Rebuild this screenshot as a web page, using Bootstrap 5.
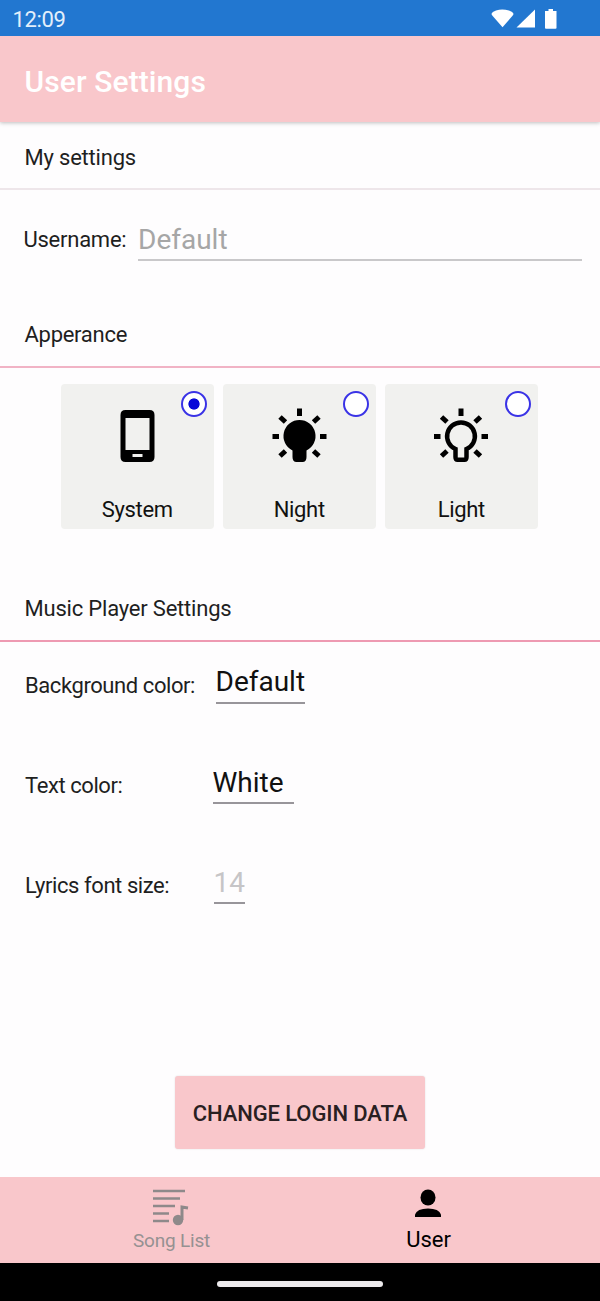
<!DOCTYPE html>
<html lang="en">
<head>
<meta charset="utf-8">
<meta name="viewport" content="width=device-width, initial-scale=1">
<title>User Settings</title>
<link href="https://cdn.jsdelivr.net/npm/bootstrap@5.3.0/dist/css/bootstrap.min.css" rel="stylesheet">
<style>
:root { --pink: #f9c7cb; --rule: #f1b3c5; }
body { width: 600px; height: 1301px; margin: 0; background: #fefdfe; color: #1f1f1f; font-family: Roboto, sans-serif; font-size: 22px; line-height: 26px; overflow: hidden; }
.status-strip { height: 36px; background: #2277d0; color: #e3effb; padding: 2px 43.5px 0 12.5px; letter-spacing: -.35px; }
.status-strip span { padding-top: 2px; }
.title-strip { height: 86px; background: var(--pink); box-shadow: 0 1px 4px rgba(0,0,0,.25); clip-path: inset(0 0 -8px 0); padding: 5px 24.5px 0; position: relative; }
.title-strip h1 { font-size: 30px; line-height: 36px; font-weight: 500; color: #fff; letter-spacing: .1px; }
.section-title { font-size: 22px; line-height: 26px; font-weight: 400; padding: 1px 24.5px 0; border-bottom: 2px solid var(--rule); letter-spacing: -.2px; }
.sec-mine { height: 68px; padding-top: 23px; border-color: #eee6ea; }
.sec-look { height: 47px; letter-spacing: -.28px; }
.sec-player { height: 46px; padding-top: 0; border-color: #ee9ab2; }
.row-user { height: 131px; padding: 37px 18px 0 23.5px; }
.row-user label { width: 114.5px; letter-spacing: -.25px; }
.line-input { appearance: none; border: 0; border-bottom: 2px solid #c9c8ca; border-radius: 0; background: transparent; padding: 0; font-size: 28px; line-height: 32px; color: #111; outline: 0; }
.line-input::placeholder { color: #a6a6a6; opacity: 1; }
.name-input { height: 38px; margin-top: -4px; padding-bottom: 4px; }
.options { height: 228px; padding: 16px 1.5px 0 0; gap: 9px; }
.option { width: 153px; height: 145px; background: #f1f1ef; border-radius: 4px; color: #111; }
.option svg { display: block; margin: 21px auto 0; }
.option .caption { margin-top: 32px; letter-spacing: -.35px; }
.option input { appearance: none; position: absolute; top: 7px; right: 7px; width: 26px; height: 26px; margin: 0; border: 2px solid #3a33e6; border-radius: 50%; background: #fff; }
.option input:checked { background: radial-gradient(circle, #0808d8 5.2px, #fff 6px); }
.pref { height: 100.3px; padding-left: 25px; }
.pref .pref-label { width: 187.5px; padding-top: 30.5px; letter-spacing: -.42px; }
.pref .line-input { margin-top: 23px; height: 38.500px; padding-bottom: 3px; border-bottom: 2px solid #98959a; }
.pref .line-input::placeholder { color: #c6c5c7; }
.login-area { height: 234.1px; padding-top: 133.5px; }
.login-btn { width: 250px; height: 73px; background: var(--pink); border: 0; border-radius: 3px; font-size: 22px; font-weight: 500; color: #292022; padding: 2px 0 0; letter-spacing: -.1px; box-shadow: 0 0 2px rgba(0,0,0,.12); }
.tabs { height: 86px; background: var(--pink); }
.tab-item { width: 257px; text-decoration: none; color: #000; padding-top: 11px; }
.tab-item.muted { color: #969192; font-size: 19px; letter-spacing: -.2px; }
.tab-item.muted svg { margin-right: 2px; }
.tab-item svg { margin-right: 1px; }
.home-strip { height: 38px; background: #000; padding-top: 18px; }
.home-strip span { width: 166px; height: 6px; background: #eceaec; }
</style>
</head>
<body class="d-flex flex-column">
<div class="status-strip d-flex justify-content-between align-items-center flex-shrink-0">
  <span>12:09</span>
  <svg width="66" height="22" viewBox="0 0 66 22" fill="#fff"><path d="M.5 5.800Q1 4 5 2.600q6-2 13 0Q22 4 22.500 5.800q0 .8-1 2L11.500 19.300 1.500 7.800Q.5 6.600.5 5.800Z"/><path d="M25.500 19.500 44 1.500v18Z"/><path d="M57.500 1H62v2h3.500v17q0 .8-1 .8h-9.500q-1 0-1-.8V3h3.500Z"/></svg>
</div>
<header class="title-strip d-flex align-items-center flex-shrink-0"><h1 class="m-0">User Settings</h1></header>
<main class="d-flex flex-column flex-shrink-0">
  <h2 class="section-title sec-mine m-0">My settings</h2>
  <div class="row-user d-flex align-items-start">
    <label for="user">Username:</label>
    <input id="user" class="line-input name-input flex-grow-1" placeholder="Default">
  </div>
  <h2 class="section-title sec-look m-0">Apperance</h2>
  <div class="options d-flex justify-content-center align-items-start">
    <label class="option position-relative text-center">
      <input type="radio" name="theme" checked>
      <svg width="60" height="60" viewBox="0 0 60 60"><path fill-rule="evenodd" d="M18.500 5h24q5 0 5 5v42q0 5-5 5h-24q-5 0-5-5V10q0-5 5-5Zm0 8v32h24V13ZM25.500 49v3h10v-3Z"/></svg>
      <div class="caption">System</div>
    </label>
    <label class="option position-relative text-center">
      <input type="radio" name="theme">
      <svg width="60" height="60" viewBox="-.5 0 60 60"><path d="M30 15a16 16 0 0 1 7 30.400V52q0 5-4 5h-6q-4 0-4-5v-6.600A16 16 0 0 1 30 15Z"/><path d="M30 3.500v7.500M3 31.500h6.500M50.500 31.500h6.500M10.500 12l5.500 5M49.500 12l-5.500 5M10.500 51l5.500-5M49.500 51l-5.500-5" stroke="#000" stroke-width="5"/></svg>
      <div class="caption">Night</div>
    </label>
    <label class="option position-relative text-center">
      <input type="radio" name="theme">
      <svg width="60" height="60" viewBox="0 0 60 60" fill="none" stroke="#000"><path d="M30 17.500a13.800 13.800 0 0 1 5.500 26.500V52q0 2.700-2 2.700h-7q-2 0-2-2.700v-8A13.800 13.800 0 0 1 30 17.500Z" stroke-width="4.500"/><path d="M30 3.500v7.500M3 31.500h6.500M50.500 31.500h6.500M10.500 12l5.500 5M49.500 12l-5.500 5M10.500 51l5.500-5M49.500 51l-5.500-5" stroke-width="5"/></svg>
      <div class="caption">Light</div>
    </label>
  </div>
  <h2 class="section-title sec-player m-0">Music Player Settings</h2>
  <div class="pref d-flex align-items-start"><label for="bg" class="pref-label">Background color:</label><input id="bg" class="line-input" style="width:89px;margin-left:3px" value="Default"></div>
  <div class="pref d-flex align-items-start"><label for="fg" class="pref-label">Text color:</label><input id="fg" class="line-input" style="width:81px" value="White"></div>
  <div class="pref d-flex align-items-start"><label for="size" class="pref-label">Lyrics font size:</label><input id="size" class="line-input" style="width:31px;margin-left:1px" placeholder="14"></div>
  <div class="login-area text-center"><button class="login-btn btn" type="button">CHANGE LOGIN DATA</button></div>
</main>
<nav class="tabs d-flex justify-content-center flex-shrink-0">
  <a class="tab-item muted d-flex flex-column align-items-center" href="#">
    <svg width="36" height="40" viewBox="0 0 36 40" fill="none" stroke="#8e898a" stroke-width="2.600"><path d="M0 3h32M0 10.500h27M0 18h22M0 25.500h16M0 33h16"/><path d="M29 32V19l6 1" stroke-width="3"/><circle cx="25" cy="32" r="5.200" fill="#8e898a" stroke="none"/></svg>
    <span>Song List</span>
  </a>
  <a class="tab-item d-flex flex-column align-items-center" href="#">
    <svg width="30" height="39" viewBox="0 0 30 39"><ellipse cx="15" cy="9.500" rx="7.500" ry="8"/><path d="M2 29v-2.500Q4 20.500 15 20.500T28 26.500V29Z"/></svg>
    <span>User</span>
  </a>
</nav>
<div class="home-strip d-flex justify-content-center flex-shrink-0"><span class="rounded-pill"></span></div>
<script src="https://cdn.jsdelivr.net/npm/bootstrap@5.3.0/dist/js/bootstrap.bundle.min.js"></script>
</body>
</html>
